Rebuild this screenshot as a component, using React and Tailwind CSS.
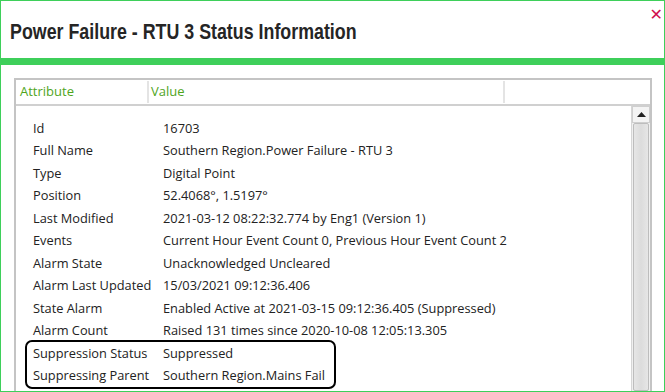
const rows = [
  ["Id", "16703"],
  ["Full Name", "Southern Region.Power Failure - RTU 3"],
  ["Type", "Digital Point"],
  ["Position", "52.4068°, 1.5197°"],
  ["Last Modified", "2021-03-12 08:22:32.774 by Eng1 (Version 1)"],
  ["Events", "Current Hour Event Count 0, Previous Hour Event Count 2"],
  ["Alarm State", "Unacknowledged Uncleared"],
  ["Alarm Last Updated", "15/03/2021 09:12:36.406"],
  ["State Alarm", "Enabled Active at 2021-03-15 09:12:36.405 (Suppressed)"],
  ["Alarm Count", "Raised 131 times since 2020-10-08 12:05:13.305"],
];

const highlighted = [
  ["Suppression Status", "Suppressed"],
  ["Suppressing Parent", "Southern Region.Mains Fail"],
];

const Row = ({ label, value }) => (
  <div className="flex h-[22.5px] items-center whitespace-nowrap">
    <span className="w-[130px] shrink-0">{label}</span>
    <span>{value}</span>
  </div>
);

export default function App() {
  return (
    <div className="w-[665px] h-[392px] overflow-hidden bg-white border border-[#3ecf5a] flex flex-col">
      {/* Title */}
      <div className="relative h-[57px] shrink-0 flex items-center pl-[9px] pt-[3px]">
        <h1
          className="text-[22px] font-bold text-[#252525] whitespace-nowrap origin-left scale-x-[0.81]"
          style={{ fontFamily: "'Liberation Sans', Arial, sans-serif" }}
        >
          Power Failure - RTU 3 Status Information
        </h1>
        <span
          className="absolute right-[1px] top-[6px] text-[#d0104c] text-[16px] font-bold leading-none"
          style={{ fontFamily: "'DejaVu Sans', sans-serif" }}
        >
          ✕
        </span>
      </div>
      <div className="h-[7px] shrink-0 bg-[#3ecf5a]" />

      {/* Body */}
      <div className="flex-1 pl-[13px] pr-[12px] pt-[13px] min-h-0" style={{ fontFamily: "'Open Sans', 'Noto Sans', sans-serif" }}>
        <div className="h-full border-2 border-b-0 border-[#c4c4c4] flex flex-col text-[12.8px] text-[#222]">
          {/* Column header */}
          <div className="h-[26px] shrink-0 flex items-center border-b-2 border-[#d0d0d0] text-[#4fa51c] text-[13px]">
            <div className="w-[133px] pl-[4px] border-r-2 border-[#e4e4e4] h-[22px] flex items-center">Attribute</div>
            <div className="w-[356px] pl-[2px] border-r-2 border-[#e4e4e4] h-[22px] flex items-center">Value</div>
          </div>

          <div className="flex flex-1 min-h-0">
            <div className="flex-1 pt-[11px] pl-[17px]">
              {rows.map(([l, v]) => (
                <Row key={l} label={l} value={v} />
              ))}
              <div className="-ml-[8px] w-[311px] border-2 border-black rounded-[7px] pl-[6px] -mt-[2px]">
                {highlighted.map(([l, v]) => (
                  <div key={l} className="flex h-[22.5px] items-center whitespace-nowrap">
                    <span className="w-[130px] shrink-0">{l}</span>
                    <span>{v}</span>
                  </div>
                ))}
              </div>
            </div>

            {/* Scrollbar */}
            <div className="w-[19px] shrink-0 flex flex-col border-l border-[#d6d6d6] bg-[#f0f0f0]">
              <div className="h-[17px] flex items-center justify-center border border-[#cfcfcf] bg-[#f4f4f4]">
                <svg width="9" height="5" viewBox="0 0 9 5">
                  <path d="M0 5 L4.5 0 L9 5 Z" fill="#222" />
                </svg>
              </div>
              <div className="flex-1 mx-[1px] border border-[#bdbdbd] rounded-[2px] bg-gradient-to-r from-[#e6e6e6] via-[#dcdcdc] to-[#e6e6e6]" />
            </div>
          </div>
        </div>
      </div>
    </div>
  );
}
